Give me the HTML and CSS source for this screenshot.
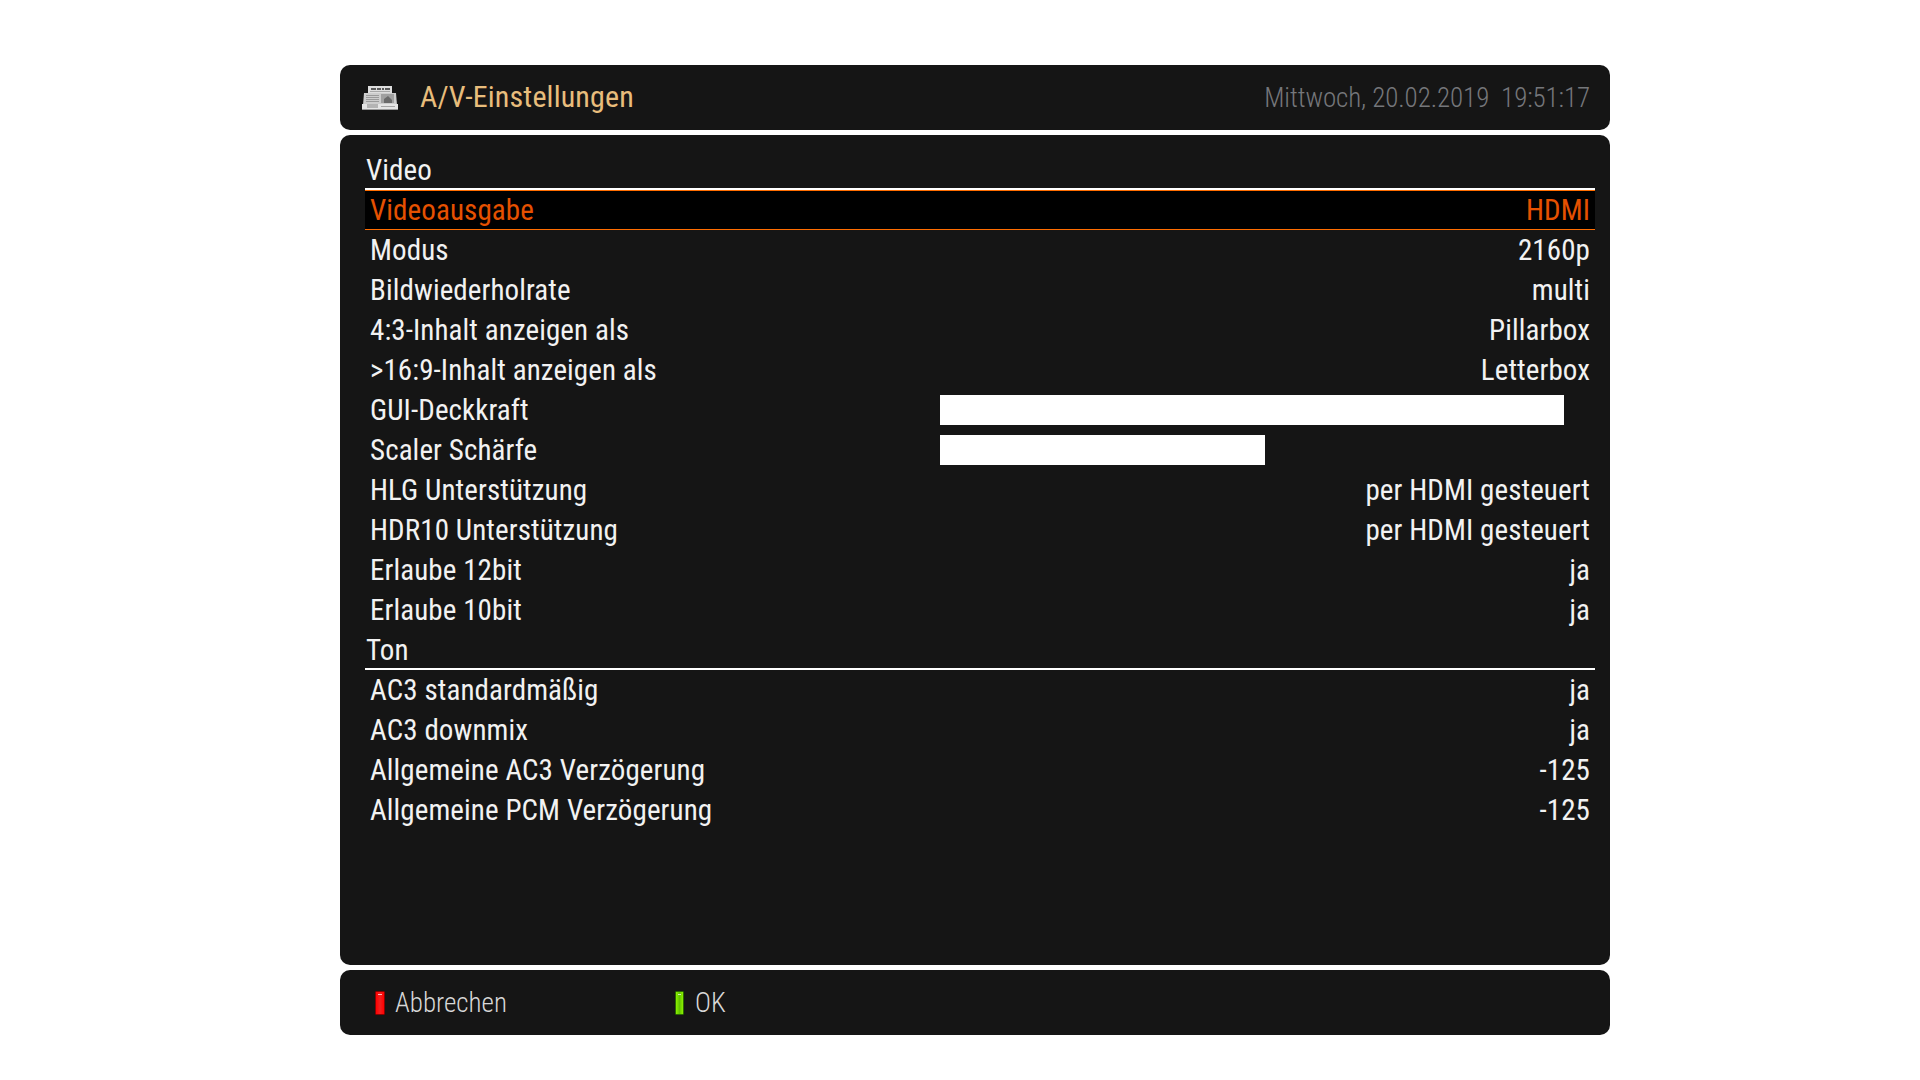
FILE: index.html
```html
<!DOCTYPE html>
<html lang="de">
<head>
    <meta charset="UTF-8">
    <title>A/V-Einstellungen</title>
    <link rel="stylesheet" href="styles.css">
</head>
<body>
    <div class="screen">
        <div class="panel header">
            <svg class="news-icon" width="36" height="24" viewBox="0 0 36 24">
                <path d="M6 0h24v8H6z" fill="#dedede"/>
                <path d="M9 2h5v2H9zM15 2h4v2h-4zM20 2h2v2h-2zM23 2h5v2h-5z" fill="#5a5a5a"/>
                <path d="M8 5h20v1H8z" fill="#a8a8a8"/>
                <path d="M2 7h32l1 12H1z" fill="#cdcdcd"/>
                <path d="M4 9h13v1H4zM4 11h13v1H4zM4 13h13v1H4zM4 15h13v1H4z" fill="#9a9a9a"/>
                <path d="M19 8h13v9H19z" fill="#a0a0a0"/>
                <path d="M22 13l4-3 4 4v3h-8z" fill="#6a6a6a"/>
                <path d="M0 18h36v6H0z" fill="#e4e4e4"/>
                <path d="M5 18h11v4H5z" fill="#b4b4b4"/>
                <path d="M19 20h14v1H19z" fill="#a4a4a4"/>
                <path d="M0 23h36v1H0z" fill="#9a9a9a"/>
            </svg>
            <span class="title">A/V-Einstellungen</span>
            <span class="clock">Mittwoch, 20.02.2019&nbsp; 19:51:17</span>
        </div>

        <div class="panel main">
            <div class="section">Video</div>
            <div class="row selected"><span>Videoausgabe</span><span>HDMI</span></div>
            <div class="row"><span>Modus</span><span>2160p</span></div>
            <div class="row"><span>Bildwiederholrate</span><span>multi</span></div>
            <div class="row"><span>4:3-Inhalt anzeigen als</span><span>Pillarbox</span></div>
            <div class="row"><span>&gt;16:9-Inhalt anzeigen als</span><span>Letterbox</span></div>
            <div class="row"><span>GUI-Deckkraft</span><div class="slider"><div class="fill" style="width: 624px"></div></div></div>
            <div class="row"><span>Scaler Schärfe</span><div class="slider"><div class="fill" style="width: 325px"></div></div></div>
            <div class="row"><span>HLG Unterstützung</span><span>per HDMI gesteuert</span></div>
            <div class="row"><span>HDR10 Unterstützung</span><span>per HDMI gesteuert</span></div>
            <div class="row"><span>Erlaube 12bit</span><span>ja</span></div>
            <div class="row"><span>Erlaube 10bit</span><span>ja</span></div>
            <div class="section">Ton</div>
            <div class="row"><span>AC3 standardmäßig</span><span>ja</span></div>
            <div class="row"><span>AC3 downmix</span><span>ja</span></div>
            <div class="row"><span>Allgemeine AC3 Verzögerung</span><span>-125</span></div>
            <div class="row"><span>Allgemeine PCM Verzögerung</span><span>-125</span></div>
        </div>

        <div class="panel footer">
            <div class="key"><span class="led red"></span>Abbrechen</div>
            <div class="key"><span class="led green"></span>OK</div>
        </div>
    </div>
</body>
</html>
```

FILE: styles.css
```css
body {
    margin: 0;
    background-color: #fff;
    font-family: Roboto, sans-serif;
    font-stretch: 75%;
}
.screen {
    display: flex;
    flex-direction: column;
    gap: 5px;
    width: 1270px;
    margin-left: 340px;
    padding-top: 65px;
}
.panel {
    background-color: #151515;
    border-radius: 10px;
}
.header {
    display: flex;
    align-items: center;
    height: 65px;
    padding: 0 20px 0 22px;
}
.news-icon {
    margin-right: 22px;
}
.title {
    margin-bottom: 2px;
    font-size: 30px;
    letter-spacing: 0.15px;
    color: #e8bd7c;
}
.clock {
    margin-left: auto;
    font-size: 27px;
    font-weight: 300;
    letter-spacing: -0.1px;
    color: #75777b;
}
.main {
    height: 830px;
    box-sizing: border-box;
    padding: 15px 20px 0 25px;
    color: #f2f2f2;
    font-size: 29px;
    letter-spacing: 0.1px;
}
.section {
    height: 40px;
    box-sizing: border-box;
    margin-right: -5px;
    padding-left: 1px;
    line-height: 40px;
    border-bottom: 2px solid #fff;
}
.row {
    display: flex;
    justify-content: space-between;
    align-items: center;
    height: 40px;
    box-sizing: border-box;
    margin-right: -5px;
    padding: 0 5px;
}
.selected {
    background-color: #000;
    color: #e65100;
    border-top: 1px solid #ff6d00;
    border-bottom: 1px solid #ff6d00;
}
.slider {
    width: 650px;
    height: 30px;
}
.fill {
    height: 100%;
    background-color: #fff;
}
.footer {
    display: flex;
    align-items: center;
    height: 65px;
    padding-left: 35px;
    font-size: 27px;
    font-weight: 300;
    color: #d8d8d8;
}
.key {
    display: flex;
    align-items: center;
    width: 300px;
}
.led {
    position: relative;
    box-sizing: border-box;
    width: 10px;
    height: 24px;
    margin-right: 10px;
    border: 1px solid;
    border-radius: 1px;
}
.led::after {
    content: "";
    position: absolute;
    top: 2px;
    left: 2px;
    right: 2px;
    height: 1px;
    background-color: rgba(255, 255, 255, 0.7);
}
.red {
    background: linear-gradient(90deg, #ff0000, #f02020 50%, #ff0000);
    border-color: #8a0000;
}
.green {
    width: 9px;
    margin-right: 11px;
    background: linear-gradient(90deg, #8cf000, #62c400 50%, #8cf000);
    border-color: #2a6a00;
}
```
